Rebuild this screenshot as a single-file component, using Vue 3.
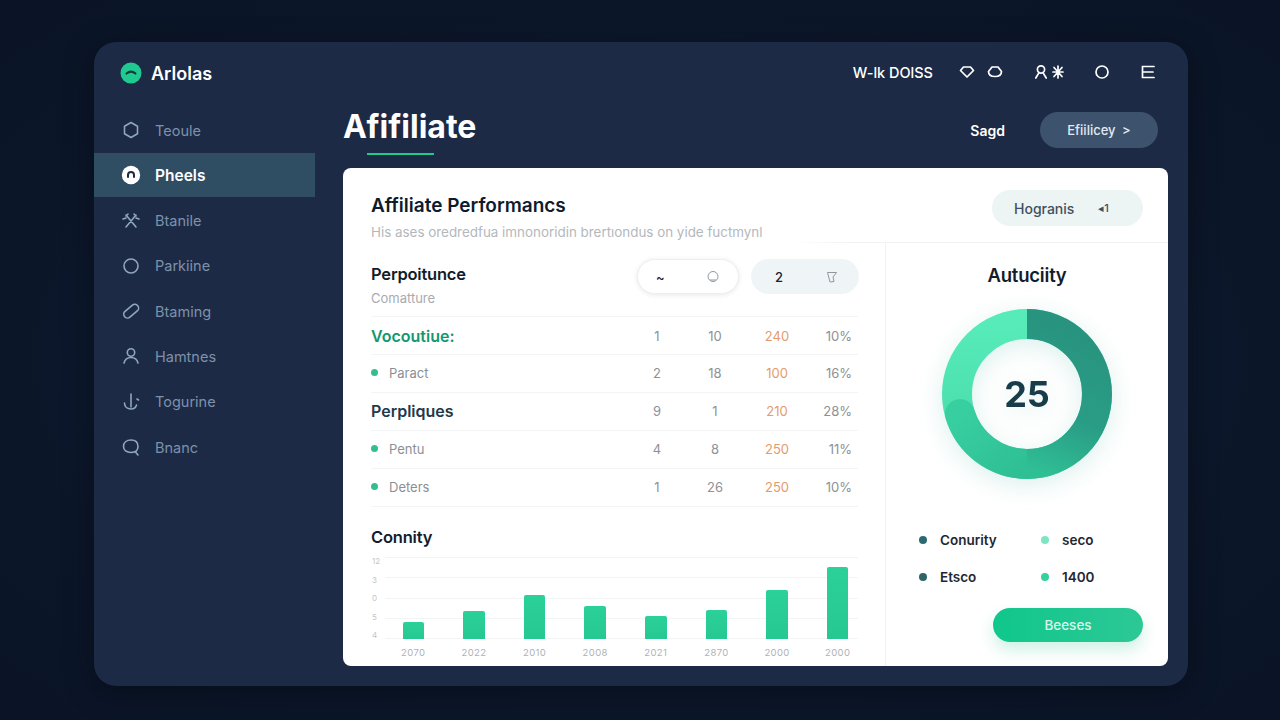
<template>
  <div class="page">
    <div class="shell">
      <aside class="sidebar">
        <div class="brand">
          <svg class="brand-mark" viewBox="0 0 22 22">
            <circle cx="11" cy="11" r="10.5" fill="#1fc98f" />
            <path d="M6.500 11.600 Q11 7.600 15.500 11.600" fill="none" stroke="#123a3c" stroke-width="2" stroke-linecap="round" />
          </svg>
          <span>Arlolas</span>
        </div>
        <nav class="nav">
          <a v-for="item in navItems" :key="item.label" class="nav-item" :class="{ active: item.active }">
            <svg class="nav-icon" viewBox="0 0 20 20" v-html="item.icon"></svg>
            <span>{{ item.label }}</span>
          </a>
        </nav>
      </aside>

      <main class="main">
        <div class="topbar">
          <span class="top-label">W-lk DOlSS</span>
          <svg class="top-icon ic1" viewBox="0 0 16 16"><path d="M4.500 3h7l3 3.500L8 13 1.500 6.500z" stroke-linejoin="round" /></svg>
          <svg class="top-icon ic2" viewBox="0 0 16 16"><path d="M5 3h6l3.500 4.500c0 3-2 5-6.500 5s-6.500-2-6.500-5z" stroke-linejoin="round" /></svg>
          <svg class="top-icon ic3" viewBox="0 0 16 16"><circle cx="8" cy="5.500" r="3.600" /><path d="M2.800 14 L6 8.600 M13.200 14 L10 8.600" /></svg>
          <svg class="top-icon ic4" viewBox="0 0 16 16"><path d="M4 3.500l8 9M12 3.500l-8 9M8 2v12M3 8h10" /></svg>
          <svg class="top-icon ic5" viewBox="0 0 16 16"><circle cx="8" cy="8" r="6" /></svg>
          <svg class="top-icon ic6" viewBox="0 0 16 16"><path d="M14 2.500H2.500v11H14M2.500 8H13" /></svg>
        </div>

        <div class="head">
          <div class="head-title">
            <h1>Afifiliate</h1>
            <div class="underline"></div>
          </div>
          <div class="head-actions">
            <span class="saved">Sagd</span>
            <button class="efficiency">Efiilicey <span class="chev">&gt;</span></button>
          </div>
        </div>

        <section class="card">
          <header class="card-head">
            <div>
              <h2>Affiliate Performancs</h2>
              <p>His ases oredredfua imnonoridin brertıondus on yide fuctmynl</p>
            </div>
            <div class="program-pill"><span>Hogranis</span><small>◂1</small></div>
          </header>
          <div class="rule"></div>

          <div class="card-body">
            <div class="left">
              <div class="perf-head">
                <div>
                  <h3>Perpoitunce</h3>
                  <p>Comatture</p>
                </div>
                <div class="pills">
                  <div class="pill white">
                    <b>~</b>
                    <svg viewBox="0 0 14 14"><circle cx="7" cy="6.500" r="5" /><path d="M4 10h6" /></svg>
                  </div>
                  <div class="pill tint">
                    <b>2</b>
                    <svg viewBox="0 0 14 14"><path d="M2.500 2.500h9L8 7l1 4.500-4 .5z" /></svg>
                  </div>
                </div>
              </div>

              <div class="table">
                <div v-for="row in rows" :key="row.name" class="row">
                  <div class="name" :class="row.kind">
                    <i v-if="row.kind === 'item'" class="dot"></i>{{ row.name }}
                  </div>
                  <span class="num">{{ row.a }}</span>
                  <span class="num">{{ row.b }}</span>
                  <span class="num orange">{{ row.c }}</span>
                  <span class="num pct">{{ row.d }}</span>
                </div>
              </div>

              <h3 class="chart-title">Connity</h3>
              <div class="chart">
                <div class="y-axis">
                  <span v-for="t in yTicks" :key="t">{{ t }}</span>
                </div>
                <div class="plot-wrap">
                  <div class="plot">
                    <div class="grid-lines">
                      <i v-for="t in yTicks" :key="t"></i>
                    </div>
                    <div class="bars">
                      <div v-for="(bar, i) in bars" :key="i" class="bar-slot">
                        <div class="bar" :style="{ height: bar.h + 'px' }"></div>
                      </div>
                    </div>
                  </div>
                  <div class="years">
                    <span v-for="(bar, i) in bars" :key="i">{{ bar.year }}</span>
                  </div>
                </div>
              </div>
            </div>

            <div class="right">
              <h3>Autuciity</h3>
              <div class="donut">
                <svg viewBox="0 0 170 170" width="170" height="170">
                  <defs>
                    <linearGradient id="lightArc" x1="0" y1="0" x2="0" y2="1">
                      <stop offset="0" stop-color="#56ebb8" />
                      <stop offset="1" stop-color="#45d9a8" />
                    </linearGradient>
                    <linearGradient id="midArc" x1="0" y1="0" x2="1" y2="1">
                      <stop offset="0" stop-color="#38cfa0" />
                      <stop offset="1" stop-color="#2fbf95" />
                    </linearGradient>
                    <linearGradient id="darkArc" gradientUnits="userSpaceOnUse" x1="120" y1="20" x2="60" y2="170">
                      <stop offset="0" stop-color="#28947f" />
                      <stop offset="0.5" stop-color="#2a9d86" />
                      <stop offset="0.88" stop-color="#2fbf95" />
                    </linearGradient>
                  </defs>
                  <circle cx="85" cy="85" r="70" fill="none" stroke="url(#lightArc)" stroke-width="30" />
                  <path d="M85 155 A70 70 0 0 1 18 105" fill="none" stroke="url(#midArc)" stroke-width="30" stroke-linecap="round" />
                  <path d="M85 15 A70 70 0 0 1 85 155" fill="none" stroke="url(#darkArc)" stroke-width="30" />
                </svg>
                <strong>25</strong>
              </div>
              <div class="legend">
                <div v-for="entry in legend" :key="entry.label" class="legend-item">
                  <i :style="{ background: entry.color }"></i>{{ entry.label }}
                </div>
              </div>
              <div class="cta-row">
                <button class="cta">Beeses</button>
              </div>
            </div>
          </div>
        </section>
      </main>
    </div>
  </div>
</template>

<script setup>
const navItems = [
  { label: 'Teoule', icon: '<path d="M10 2.500l6.500 3.700v7.600L10 17.500l-6.500-3.700V6.200z"/>' },
  { label: 'Pheels', active: true, icon: '<circle cx="10" cy="10" r="9.200" fill="#fff" stroke="none"/><path d="M7 12V10a3 3 0 0 1 6 0v2" stroke="#1c2a45" stroke-width="2"/>' },
  { label: 'Btanile', icon: '<path d="M5 4l10 12M15 4L5 16M2 8l3-1M18 8l-3-1M7 3l-2 2M13 3l2 2"/>' },
  { label: 'Parkiine', icon: '<circle cx="10" cy="10" r="7"/>' },
  { label: 'Btaming', icon: '<rect x="1.500" y="6.500" width="17" height="7.500" rx="3.700" transform="rotate(-40 10 10)"/>' },
  { label: 'Hamtnes', icon: '<circle cx="10" cy="6.500" r="3.700"/><path d="M3 17c1-4 4-5.500 7-5.500s6 1.500 7 5.500"/>' },
  { label: 'Togurine', icon: '<path d="M10 2v13M3.500 11c0 4 3 6 6.500 6s5-2 5.500-4M16 7l1.500 1"/>' },
  { label: 'Bnanc', icon: '<path d="M10 3c4.500 0 7 2.700 7 6.500 0 3.600-2.500 6-7 6-4.500 0-7.500-2.400-7.500-6C2.500 5.700 5.500 3 10 3zM14.500 15l2.500 3"/>' }
]

const rows = [
  { name: 'Vocoutiue:', kind: 'group green', a: '1', b: '10', c: '240', d: '10%' },
  { name: 'Paract', kind: 'item', a: '2', b: '18', c: '100', d: '16%' },
  { name: 'Perpliques', kind: 'group', a: '9', b: '1', c: '210', d: '28%' },
  { name: 'Pentu', kind: 'item', a: '4', b: '8', c: '250', d: '11%' },
  { name: 'Deters', kind: 'item', a: '1', b: '26', c: '250', d: '10%' }
]

const yTicks = ['12', '3', '0', '5', '4']

const bars = [
  { year: '2070', h: 17 },
  { year: '2022', h: 28 },
  { year: '2010', h: 44 },
  { year: '2008', h: 33 },
  { year: '2021', h: 23 },
  { year: '2870', h: 29 },
  { year: '2000', h: 49 },
  { year: '2000', h: 72 }
]

const legend = [
  { label: 'Conurity', color: '#2b6a70' },
  { label: 'seco', color: '#7de6c0' },
  { label: 'Etsco', color: '#2f6469' },
  { label: '1400', color: '#35d09e' }
]
</script>

<style>
html,
body {
  margin: 0;
  background: #0a1528;
}
</style>

<style scoped>
* {
  box-sizing: border-box;
}

.page {
  width: 1280px;
  height: 720px;
  padding: 42px 92px 34px 94px;
  background: radial-gradient(ellipse at center, #10203a 0%, #0b1629 70%, #0a1426 100%);
  font-family: Inter, "Liberation Sans", sans-serif;
  overflow: hidden;
}

.shell {
  height: 100%;
  display: flex;
  background: #1c2a45;
  border-radius: 22px;
  box-shadow: 0 6px 30px rgba(0, 0, 0, 0.35);
  overflow: hidden;
}

.sidebar {
  width: 221px;
  flex-shrink: 0;
}

.brand {
  height: 62px;
  padding-left: 26px;
  display: flex;
  align-items: center;
  gap: 9px;
  margin-bottom: 4px;
  color: #fff;
  font-size: 18px;
  font-weight: 600;
}

.brand-mark {
  width: 22px;
  height: 22px;
}

.nav {
  display: flex;
  flex-direction: column;
  gap: 1.3px;
}

.nav-item {
  height: 44px;
  display: flex;
  align-items: center;
  gap: 14px;
  padding-left: 27px;
  color: #7c91ab;
  font-size: 14.5px;
}

.nav-item.active {
  background: #2f4d63;
  color: #fff;
  font-size: 15.5px;
  font-weight: 600;
}

.nav-icon {
  width: 20px;
  height: 20px;
  fill: none;
  stroke: #8fa6bf;
  stroke-width: 1.6;
  stroke-linecap: round;
  stroke-linejoin: round;
  overflow: visible;
}

.main {
  flex: 1;
  min-width: 0;
  display: flex;
  flex-direction: column;
  padding: 0 20px 20px 28px;
}

.topbar {
  height: 60px;
  display: flex;
  align-items: center;
  justify-content: flex-end;
  padding-right: 12px;
  color: #fff;
}

.top-label {
  font-size: 14.500px;
  font-weight: 500;
  margin-right: 26px;
}

.top-icon {
  width: 16px;
  height: 16px;
  fill: none;
  stroke: #fff;
  stroke-width: 1.7;
  stroke-linecap: round;
}

.ic2 { margin-left: 12px; }
.ic3 { margin-left: 30px; }
.ic4 { margin-left: 1px; }
.ic5 { margin-left: 28px; }
.ic6 { margin-left: 30px; }

.head {
  height: 66px;
  display: flex;
  justify-content: space-between;
  padding: 6px 10px 0 0;
}

h1 {
  margin: 0;
  color: #fff;
  font-size: 32px;
  line-height: 38px;
  font-weight: 700;
  letter-spacing: 0;
}

.underline {
  width: 67px;
  height: 2px;
  margin: 7px 0 0 24px;
  background: #1fc98f;
}

.head-actions {
  display: flex;
  align-items: center;
  gap: 35px;
  height: 36px;
  margin-top: 4px;
}

.saved {
  color: #fff;
  font-size: 14px;
  font-weight: 600;
}

.efficiency {
  width: 118px;
  height: 36px;
  border: none;
  border-radius: 18px;
  background: #3d526d;
  color: #e3e9f1;
  font-family: inherit;
  font-size: 13px;
  font-weight: 500;
}

.chev {
  margin-left: 3px;
}

.card {
  flex: 1;
  min-height: 0;
  display: flex;
  flex-direction: column;
  background: #fff;
  border-radius: 8px;
}

.card-head {
  height: 74px;
  display: flex;
  justify-content: space-between;
  padding: 22px 25px 0 28px;
}

h2 {
  margin: 1px 0 0;
  color: #111a2b;
  font-size: 19px;
  line-height: 30px;
  font-weight: 600;
  letter-spacing: 0;
}

.card-head p {
  margin: 2px 0 0;
  color: #b4b8bd;
  font-size: 13.400px;
  line-height: 18px;
}

.program-pill {
  width: 151px;
  height: 36px;
  display: flex;
  align-items: center;
  gap: 24px;
  padding-left: 22px;
  border-radius: 18px;
  background: #edf4f4;
  color: #40505e;
  font-size: 14px;
  font-weight: 500;
}

.program-pill small {
  font-size: 11px;
}

.rule {
  height: 1px;
  margin-left: 447px;
  background: linear-gradient(90deg, transparent, #f0f2f3 15%);
}

.card-body {
  flex: 1;
  min-height: 0;
  display: flex;
}

.left {
  flex: 1;
  min-width: 0;
  padding: 0 27px 0 28px;
}

.perf-head {
  height: 73px;
  display: flex;
  justify-content: space-between;
  padding-top: 20px;
}

h3 {
  margin: 0;
  color: #131c2c;
  font-size: 16.500px;
  line-height: 22px;
  font-weight: 600;
  letter-spacing: -0.2px;
}

.perf-head p {
  margin: 5px 0 0;
  color: #a7abb0;
  font-size: 13px;
  line-height: 16px;
}

.pills {
  display: flex;
  gap: 12px;
  margin: -4px -1px 0 0;
}

.pill {
  height: 35px;
  display: flex;
  align-items: center;
  justify-content: space-between;
  border-radius: 18px;
  font-size: 13px;
  color: #1b2230;
}

.pill b {
  font-weight: 500;
}

.pill svg {
  width: 14px;
  height: 14px;
  fill: none;
  stroke: #8f989e;
  stroke-width: 1;
}

.pill.white {
  width: 102px;
  padding: 0 18px;
  background: #fff;
  border: 1px solid #eceeef;
  box-shadow: 0 1px 5px rgba(20, 40, 50, 0.1);
}

.pill.tint {
  width: 108px;
  padding: 0 20px 0 24px;
  background: #eff5f6;
}

.table {
  border-top: 1px solid #f2f4f5;
}

.row {
  height: 38px;
  display: grid;
  grid-template-columns: 1fr 40px 76px 48px 57px;
  align-items: center;
  border-bottom: 1px solid #f3f4f5;
}

.row:not(:first-child) {
  padding-bottom: 2px;
}

.name {
  display: flex;
  align-items: center;
  font-size: 13px;
  color: #8b8f94;
}

.name.group {
  color: #24384a;
  font-size: 16px;
  font-weight: 600;
}

.name.green {
  color: #13986f;
}

.dot {
  width: 7px;
  height: 7px;
  margin-right: 11px;
  border-radius: 50%;
  background: #35bd92;
}

.num {
  text-align: center;
  color: #8d9196;
  font-size: 13px;
}

.orange {
  color: #e59b6e;
}

.pct {
  text-align: right;
  padding-right: 6px;
}

.chart-title {
  margin-top: 19px;
}

.chart {
  display: flex;
  margin-top: 9px;
}

.y-axis {
  width: 14px;
  height: 84px;
  margin-top: -1px;
  display: flex;
  flex-direction: column;
  justify-content: space-between;
  color: #c3c6ca;
  font-size: 8px;
  line-height: 10px;
  padding-left: 1px;
}

.plot-wrap {
  flex: 1;
  min-width: 0;
}

.plot {
  position: relative;
  height: 82px;
}

.grid-lines {
  position: absolute;
  inset: 0;
  display: flex;
  flex-direction: column;
  justify-content: space-between;
}

.grid-lines i {
  display: block;
  height: 1px;
  background: #f3f4f5;
}

.bars {
  position: relative;
  height: 100%;
  margin: 0 -10px 0 -2px;
  display: grid;
  grid-template-columns: repeat(8, 1fr);
  align-items: end;
}

.bar-slot {
  display: flex;
  justify-content: center;
}

.bar {
  width: 21.500px;
  border-radius: 2px 2px 0 0;
  background: linear-gradient(180deg, #2bd199, #26c891);
}

.years {
  margin: 7px -10px 0 -2px;
  display: grid;
  grid-template-columns: repeat(8, 1fr);
  color: #aeb2b6;
  font-size: 9.500px;
  line-height: 14px;
  letter-spacing: 0.4px;
  text-align: center;
}

.right {
  width: 283px;
  flex-shrink: 0;
  border-left: 1px solid #f0f2f3;
  display: flex;
  flex-direction: column;
  align-items: center;
  padding-top: 21px;
}

.right h3 {
  font-size: 18.500px;
}

.donut {
  position: relative;
  width: 170px;
  height: 170px;
  margin-top: 23px;
  display: flex;
  align-items: center;
  justify-content: center;
  filter: drop-shadow(0 6px 12px rgba(40, 170, 140, 0.16));
}

.donut svg {
  position: absolute;
  inset: 0;
}

.donut strong {
  position: relative;
  color: #173c4a;
  font-size: 36px;
  font-weight: 700;
  letter-spacing: 0;
}

.legend {
  width: 100%;
  margin-top: 51px;
  padding-left: 33px;
  display: grid;
  grid-template-columns: 122px 1fr;
  row-gap: 17px;
}

.legend-item {
  display: flex;
  align-items: center;
  gap: 13px;
  height: 20px;
  color: #1f2733;
  font-size: 13.500px;
  font-weight: 600;
}

.legend-item i {
  width: 8px;
  height: 8px;
  border-radius: 50%;
}

.cta-row {
  width: 100%;
  display: flex;
  justify-content: flex-end;
  padding-right: 25px;
  margin-top: 21px;
}

.cta {
  width: 150px;
  height: 34px;
  border: none;
  border-radius: 17px;
  background: linear-gradient(90deg, #10c78b, #2cc896);
  box-shadow: 0 8px 16px rgba(30, 190, 140, 0.22);
  color: #d7f6ec;
  font-family: inherit;
  font-size: 13.500px;
  font-weight: 500;
}
</style>
